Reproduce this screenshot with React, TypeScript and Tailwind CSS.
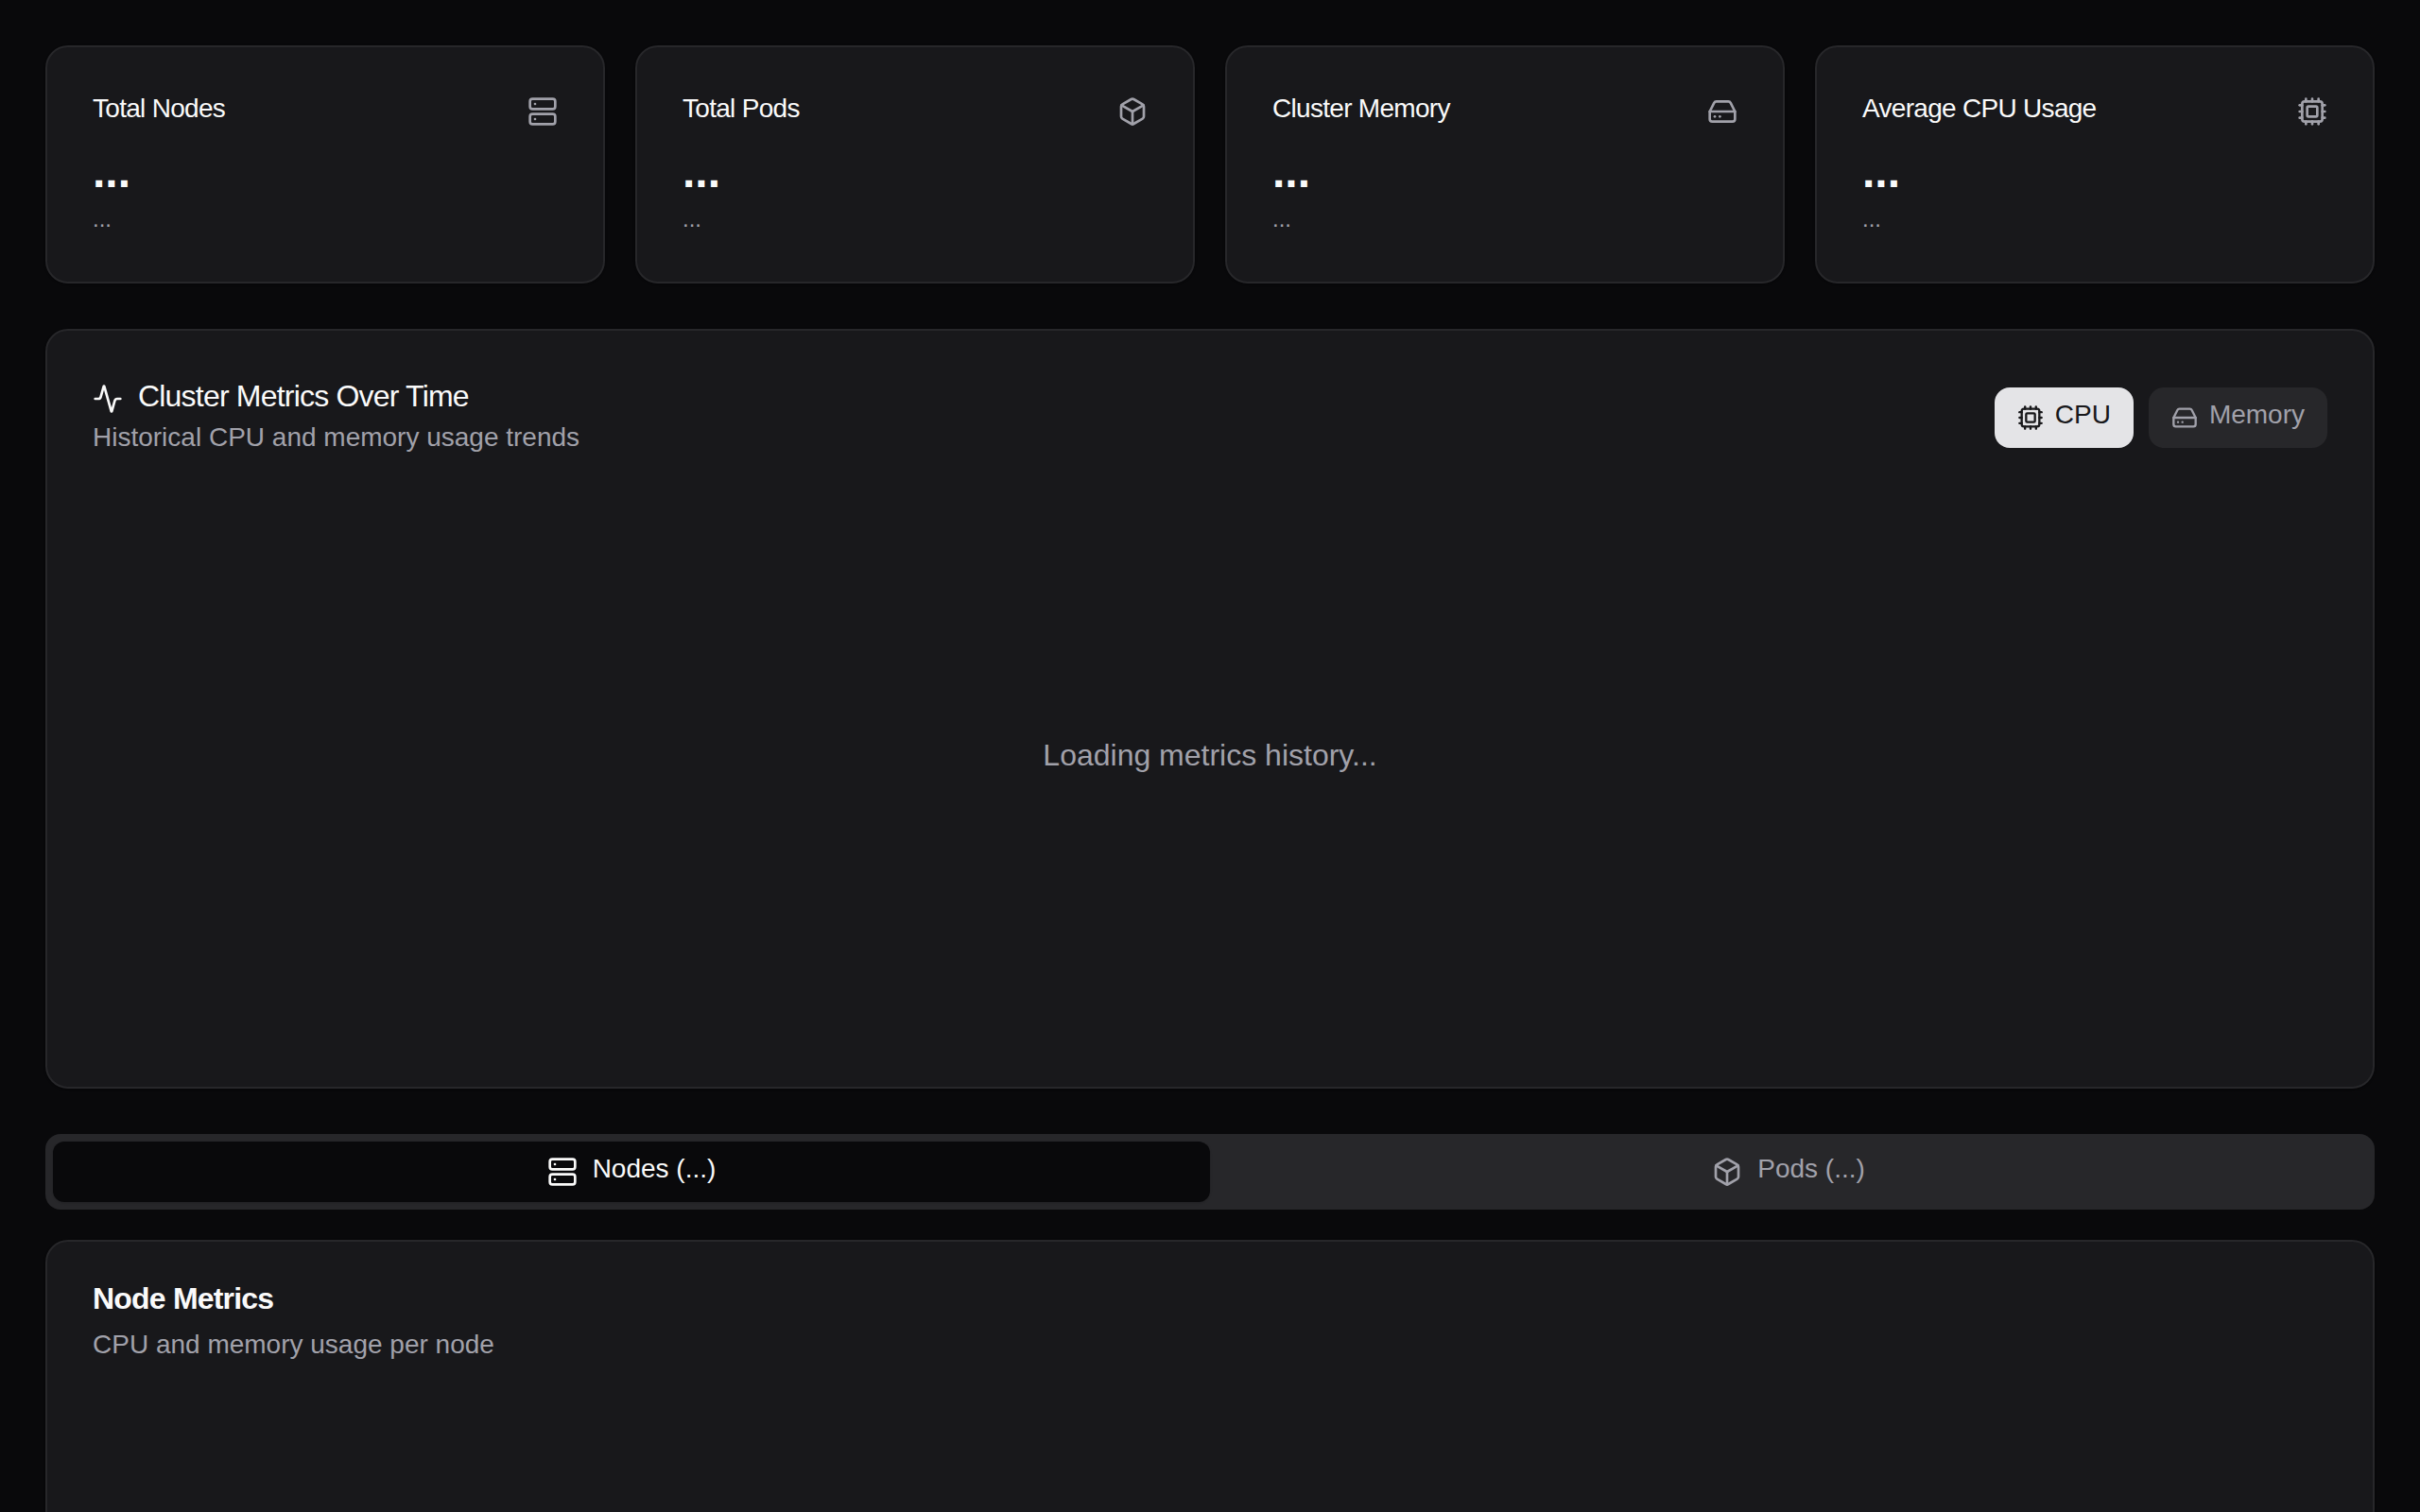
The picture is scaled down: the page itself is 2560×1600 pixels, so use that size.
import { Activity, Box, Cpu, HardDrive, Server } from "lucide-react";
import type { LucideIcon } from "lucide-react";

const STATS: { title: string; icon: LucideIcon }[] = [
  { title: "Total Nodes", icon: Server },
  { title: "Total Pods", icon: Box },
  { title: "Cluster Memory", icon: HardDrive },
  { title: "Average CPU Usage", icon: Cpu },
];

function StatCard({ title, icon: Icon }: { title: string; icon: LucideIcon }) {
  return (
    <div className="rounded-[24px] border-2 border-[#27272a] bg-[#18181b] p-[48px] shadow-sm">
      <div className="flex items-center justify-between pb-[16px]">
        <h3 className="pb-[6px] text-[28px] leading-[34px] font-medium tracking-tight text-[#fafafa]">
          {title}
        </h3>
        <Icon className="size-[32px] text-[#a1a1aa]" />
      </div>
      <div className="pb-[8px] text-[48px] leading-[56px] font-bold text-[#fafafa]">...</div>
      <p className="pb-[5px] text-[24px] leading-[27px] text-[#a1a1aa]">...</p>
    </div>
  );
}

function ToggleButton({ label, icon: Icon, active }: { label: string; icon: LucideIcon; active?: boolean }) {
  return (
    <button
      className={
        active
          ? "flex h-[64px] items-center gap-[12px] rounded-[16px] bg-[#e4e4e7] px-[24px] text-[#18181b]"
          : "flex h-[64px] items-center gap-[12px] rounded-[16px] bg-[#27272a] px-[24px] text-[#a1a1aa]"
      }
    >
      <Icon className="size-[28px]" />
      <span className="pb-[6px] text-[28px] leading-[34px]">{label}</span>
    </button>
  );
}

function TabTrigger({ label, icon: Icon, active }: { label: string; icon: LucideIcon; active?: boolean }) {
  return (
    <button
      className={
        active
          ? "flex flex-1 items-center justify-center gap-[16px] rounded-[12px] bg-[#09090b] text-[#fafafa] shadow-sm"
          : "flex flex-1 items-center justify-center gap-[16px] rounded-[12px] text-[#a1a1aa]"
      }
    >
      <Icon className="size-[32px]" />
      <span className="pb-[6px] text-[28px] leading-[34px]">{label}</span>
    </button>
  );
}

export default function App() {
  return (
    <div className="h-screen overflow-hidden bg-[#09090b] p-[48px] font-['Liberation_Sans',Arial,sans-serif]">
      <div className="grid grid-cols-4 gap-[32px]">
        {STATS.map((s) => (
          <StatCard key={s.title} title={s.title} icon={s.icon} />
        ))}
      </div>

      <div className="mt-[48px] rounded-[24px] border-2 border-[#27272a] bg-[#18181b] p-[48px] shadow-sm">
        <div className="flex items-center justify-between pb-[16px]">
          <div>
            <div className="flex items-center gap-[16px] text-[#fafafa]">
              <Activity className="size-[32px]" />
              <h2 className="pb-[5px] text-[32px] leading-[43px] tracking-tight">Cluster Metrics Over Time</h2>
            </div>
            <p className="pb-[6px] text-[28px] leading-[34px] text-[#a1a1aa]">Historical CPU and memory usage trends</p>
          </div>
          <div className="flex gap-[16px]">
            <ToggleButton label="CPU" icon={Cpu} active />
            <ToggleButton label="Memory" icon={HardDrive} />
          </div>
        </div>
        <div className="flex h-[600px] items-center justify-center">
          <span className="pb-[5px] text-[32px] leading-[43px] text-[#a1a1aa]">Loading metrics history...</span>
        </div>
      </div>

      <div className="mt-[48px] flex h-[80px] rounded-[16px] bg-[#27272a] p-[8px]">
        <TabTrigger label="Nodes (...)" icon={Server} active />
        <TabTrigger label="Pods (...)" icon={Box} />
      </div>

      <div className="mt-[32px] h-[600px] rounded-[24px] border-2 border-[#27272a] bg-[#18181b] p-[48px] shadow-sm">
        <h2 className="pb-[7px] text-[32px] leading-[25px] font-semibold tracking-tight text-[#fafafa]">Node Metrics</h2>
        <p className="mt-[12px] pb-[6px] text-[28px] leading-[34px] text-[#a1a1aa]">CPU and memory usage per node</p>
      </div>
    </div>
  );
}
